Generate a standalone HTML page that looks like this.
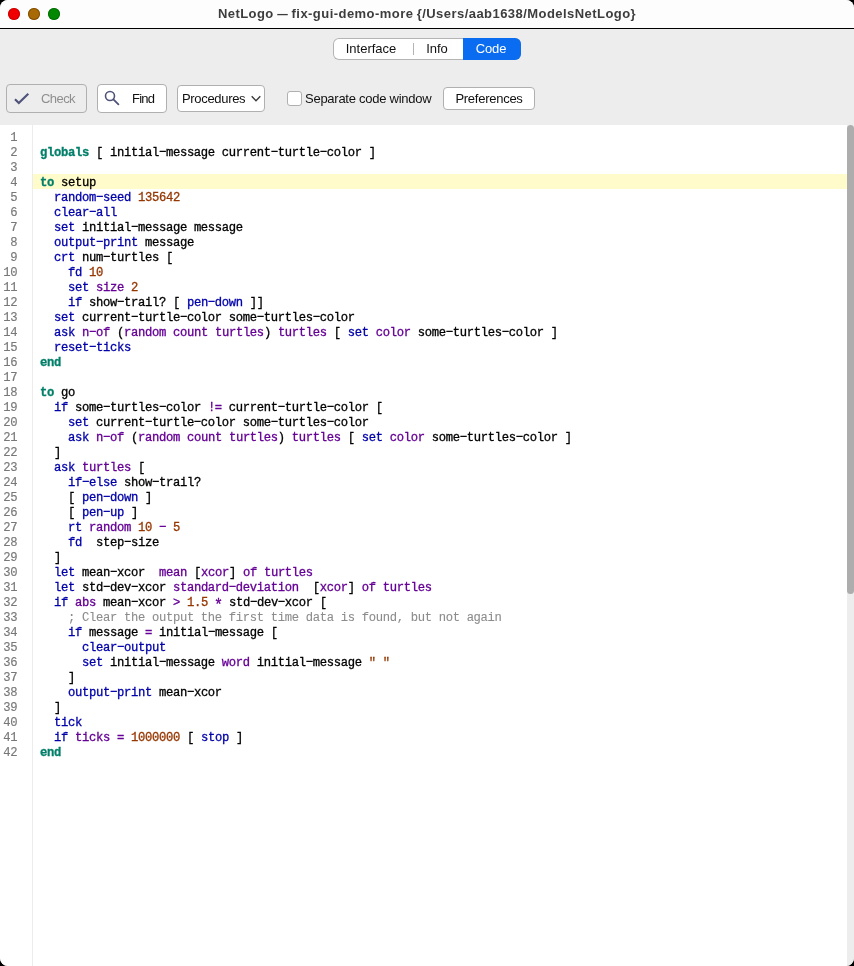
<!DOCTYPE html>
<html><head><meta charset="utf-8"><title>NetLogo</title>
<style>
*{box-sizing:border-box;margin:0;padding:0}
html,body{width:854px;height:966px;overflow:hidden;background:#000;font-family:"Liberation Sans",sans-serif}
#win{position:absolute;left:0;top:0;width:854px;height:966px;background:#ededed;border-radius:8px;overflow:hidden}
#title{position:absolute;left:0;top:0;width:854px;height:28px;background:#fdfdfd;border-bottom:1px solid #000;height:29px}
#title .t{position:absolute;left:0;width:854px;top:6px;text-align:center;font-weight:bold;font-size:13px;color:#3d3d3d;letter-spacing:0.45px;word-spacing:-0.7px;will-change:transform}
.dot{position:absolute;top:8px;width:12px;height:12px;border-radius:50%}
#tabs{position:absolute;left:333px;top:38px;width:188px;height:22px;border-radius:6px;background:#fff;overflow:hidden;font-size:13px;box-shadow:inset 0 0 0 1px #b4b4b4}
#tabs div{position:absolute;top:1px;height:20px;line-height:20px;text-align:center;color:#111;will-change:transform}
.btn{position:absolute;border:1px solid #b0b0b0;border-radius:4px;background:#fff;font-size:13px;color:#111}
.btn span{position:absolute;top:0;white-space:nowrap;will-change:transform}
#code{position:absolute;left:0;top:125px;width:847px;height:841px;background:#fff}
#gut{position:absolute;left:32px;top:0;width:1px;height:841px;background:#ececec}
.ln{position:absolute;left:0;width:847px;height:15px;line-height:15px;font-family:"Liberation Mono",monospace;font-size:12.2px;letter-spacing:-0.32px;white-space:pre}
#hlbar{position:absolute;left:33px;top:49px;width:814px;height:15px;background:#fffbcb}
#lines{position:absolute;left:0;top:125px;width:847px;height:841px;will-change:transform}
.no{position:absolute;left:0;width:17.2px;text-align:right;top:2.25px;color:#787878;-webkit-text-stroke:0.15px;transform-origin:17.2px 10.75px;transform:scale(1.0,1.12)}
.tx{position:absolute;left:40px;top:2.25px;color:#000;-webkit-text-stroke:0.3px;transform-origin:0 10.75px;transform:scaleY(1.12)}
.k{color:#007f69;font-weight:bold} .m{color:#0000aa} .r{color:#660096} .n{color:#963700} .c{color:#8c8c8c;-webkit-text-stroke:0.1px}
#sb{position:absolute;left:847px;top:125px;width:7px;height:841px;background:#ededed}
#th{position:absolute;left:0;top:0;width:7px;height:469px;border-radius:3.5px;background:#adadad}
</style></head><body>
<div id="win">
<div id="title">
<div class="dot" style="left:8px;background:#f00000;box-shadow:inset 0 0 0 1px rgba(190,0,0,.75)"></div>
<div class="dot" style="left:28px;background:#a86a04;box-shadow:inset 0 0 0 1px rgba(125,70,0,.8)"></div>
<div class="dot" style="left:48px;background:#048804;box-shadow:inset 0 0 0 1px rgba(0,105,0,.8)"></div>
<div class="t">NetLogo <span style="display:inline-block;transform:scaleX(.81);margin:0 -1.2px">—</span> fix-gui-demo-more {/Users/aab1638/ModelsNetLogo}</div>
</div>
<div id="tabs">
<div style="left:0;width:76px">Interface</div>
<div style="left:80px;width:1px;top:5px;height:12px;background:#b4b4b4"></div>
<div style="left:79px;width:50px">Info</div>
<div style="left:130px;width:58px;top:0;height:22px;background:#0a6cf0"></div>
<div style="left:130px;width:56px;color:#fff;letter-spacing:-0.1px">Code</div>
</div>
<div class="btn" style="left:6px;top:84px;width:81px;height:29px;background:#ededed"><span style="left:33.6px;top:6px;color:#8f8f8f;letter-spacing:-0.57px">Check</span>
<svg style="position:absolute;left:7px;top:7px" width="17" height="14" viewBox="0 0 17 14"><path d="M1 7.3 L4.8 11 L14.3 1.7" fill="none" stroke="#50547a" stroke-width="2.2"/></svg></div>
<div class="btn" style="left:97px;top:84px;width:70px;height:29px"><span style="left:33.8px;top:6px;letter-spacing:-0.8px">Find</span>
<svg style="position:absolute;left:6.3px;top:5.2px" width="16" height="16" viewBox="0 0 16 16"><circle cx="6" cy="6" r="4.5" fill="none" stroke="#50547a" stroke-width="1.6"/><path d="M9.4 9.4 L14.4 14.4" stroke="#50547a" stroke-width="1.8" stroke-linecap="round"/></svg></div>
<div class="btn" style="left:177px;top:85px;width:88px;height:27px"><span style="left:4px;top:5px;letter-spacing:-0.32px">Procedures</span>
<svg style="position:absolute;left:71px;top:8.5px" width="13" height="8" viewBox="0 0 13 8"><path d="M2.7 1.3 L7 5.8 L11.3 1.3" fill="none" stroke="#3a3a3a" stroke-width="1.35"/></svg></div>
<div class="btn" style="left:287px;top:91px;width:15px;height:15px;border-radius:3px"></div>
<div style="position:absolute;left:305px;top:91px;font-size:13px;color:#111;white-space:nowrap;letter-spacing:-0.26px;will-change:transform">Separate code window</div>
<div class="btn" style="left:443px;top:87px;width:92px;height:23px"><span style="left:0;width:90px;text-align:center;top:3px;letter-spacing:-0.26px">Preferences</span></div>
<div id="code"><div id="gut"></div><div id="hlbar"></div></div>
<div id="lines">
<div class="ln" style="top:4px"><span class="no">1</span><span class="tx"></span></div>
<div class="ln" style="top:19px"><span class="no">2</span><span class="tx"><span class="k">globals</span> [ initial&#8722;message current&#8722;turtle&#8722;color ]</span></div>
<div class="ln" style="top:34px"><span class="no">3</span><span class="tx"></span></div>
<div class="ln hl" style="top:49px"><span class="no">4</span><span class="tx"><span class="k">to</span> setup</span></div>
<div class="ln" style="top:64px"><span class="no">5</span><span class="tx">  <span class="m">random&#8722;seed</span> <span class="n">135642</span></span></div>
<div class="ln" style="top:79px"><span class="no">6</span><span class="tx">  <span class="m">clear&#8722;all</span></span></div>
<div class="ln" style="top:94px"><span class="no">7</span><span class="tx">  <span class="m">set</span> initial&#8722;message message</span></div>
<div class="ln" style="top:109px"><span class="no">8</span><span class="tx">  <span class="m">output&#8722;print</span> message</span></div>
<div class="ln" style="top:124px"><span class="no">9</span><span class="tx">  <span class="m">crt</span> num&#8722;turtles [</span></div>
<div class="ln" style="top:139px"><span class="no">10</span><span class="tx">    <span class="m">fd</span> <span class="n">10</span></span></div>
<div class="ln" style="top:154px"><span class="no">11</span><span class="tx">    <span class="m">set</span> <span class="r">size</span> <span class="n">2</span></span></div>
<div class="ln" style="top:169px"><span class="no">12</span><span class="tx">    <span class="m">if</span> show&#8722;trail? [ <span class="m">pen&#8722;down</span> ]]</span></div>
<div class="ln" style="top:184px"><span class="no">13</span><span class="tx">  <span class="m">set</span> current&#8722;turtle&#8722;color some&#8722;turtles&#8722;color</span></div>
<div class="ln" style="top:199px"><span class="no">14</span><span class="tx">  <span class="m">ask</span> <span class="r">n&#8722;of</span> (<span class="r">random</span> <span class="r">count</span> <span class="r">turtles</span>) <span class="r">turtles</span> [ <span class="m">set</span> <span class="r">color</span> some&#8722;turtles&#8722;color ]</span></div>
<div class="ln" style="top:214px"><span class="no">15</span><span class="tx">  <span class="m">reset&#8722;ticks</span></span></div>
<div class="ln" style="top:229px"><span class="no">16</span><span class="tx"><span class="k">end</span></span></div>
<div class="ln" style="top:244px"><span class="no">17</span><span class="tx"></span></div>
<div class="ln" style="top:259px"><span class="no">18</span><span class="tx"><span class="k">to</span> go</span></div>
<div class="ln" style="top:274px"><span class="no">19</span><span class="tx">  <span class="m">if</span> some&#8722;turtles&#8722;color <span class="r">!=</span> current&#8722;turtle&#8722;color [</span></div>
<div class="ln" style="top:289px"><span class="no">20</span><span class="tx">    <span class="m">set</span> current&#8722;turtle&#8722;color some&#8722;turtles&#8722;color</span></div>
<div class="ln" style="top:304px"><span class="no">21</span><span class="tx">    <span class="m">ask</span> <span class="r">n&#8722;of</span> (<span class="r">random</span> <span class="r">count</span> <span class="r">turtles</span>) <span class="r">turtles</span> [ <span class="m">set</span> <span class="r">color</span> some&#8722;turtles&#8722;color ]</span></div>
<div class="ln" style="top:319px"><span class="no">22</span><span class="tx">  ]</span></div>
<div class="ln" style="top:334px"><span class="no">23</span><span class="tx">  <span class="m">ask</span> <span class="r">turtles</span> [</span></div>
<div class="ln" style="top:349px"><span class="no">24</span><span class="tx">    <span class="m">if&#8722;else</span> show&#8722;trail?</span></div>
<div class="ln" style="top:364px"><span class="no">25</span><span class="tx">    [ <span class="m">pen&#8722;down</span> ]</span></div>
<div class="ln" style="top:379px"><span class="no">26</span><span class="tx">    [ <span class="m">pen&#8722;up</span> ]</span></div>
<div class="ln" style="top:394px"><span class="no">27</span><span class="tx">    <span class="m">rt</span> <span class="r">random</span> <span class="n">10</span> <span class="r">&#8722;</span> <span class="n">5</span></span></div>
<div class="ln" style="top:409px"><span class="no">28</span><span class="tx">    <span class="m">fd</span>  step&#8722;size</span></div>
<div class="ln" style="top:424px"><span class="no">29</span><span class="tx">  ]</span></div>
<div class="ln" style="top:439px"><span class="no">30</span><span class="tx">  <span class="m">let</span> mean&#8722;xcor  <span class="r">mean</span> [<span class="r">xcor</span>] <span class="r">of</span> <span class="r">turtles</span></span></div>
<div class="ln" style="top:454px"><span class="no">31</span><span class="tx">  <span class="m">let</span> std&#8722;dev&#8722;xcor <span class="r">standard&#8722;deviation</span>  [<span class="r">xcor</span>] <span class="r">of</span> <span class="r">turtles</span></span></div>
<div class="ln" style="top:469px"><span class="no">32</span><span class="tx">  <span class="m">if</span> <span class="r">abs</span> mean&#8722;xcor <span class="r">&gt;</span> <span class="n">1.5</span> <span class="r"><span style="position:relative;top:4px;font-size:15px;line-height:1px;margin-left:-0.9px;letter-spacing:-1.1px">*</span></span> std&#8722;dev&#8722;xcor [</span></div>
<div class="ln" style="top:484px"><span class="no">33</span><span class="tx">    <span class="c">; Clear the output the first time data is found, but not again</span></span></div>
<div class="ln" style="top:499px"><span class="no">34</span><span class="tx">    <span class="m">if</span> message <span class="r">=</span> initial&#8722;message [</span></div>
<div class="ln" style="top:514px"><span class="no">35</span><span class="tx">      <span class="m">clear&#8722;output</span></span></div>
<div class="ln" style="top:529px"><span class="no">36</span><span class="tx">      <span class="m">set</span> initial&#8722;message <span class="r">word</span> initial&#8722;message <span class="n">&quot; &quot;</span></span></div>
<div class="ln" style="top:544px"><span class="no">37</span><span class="tx">    ]</span></div>
<div class="ln" style="top:559px"><span class="no">38</span><span class="tx">    <span class="m">output&#8722;print</span> mean&#8722;xcor</span></div>
<div class="ln" style="top:574px"><span class="no">39</span><span class="tx">  ]</span></div>
<div class="ln" style="top:589px"><span class="no">40</span><span class="tx">  <span class="m">tick</span></span></div>
<div class="ln" style="top:604px"><span class="no">41</span><span class="tx">  <span class="m">if</span> <span class="r">ticks</span> <span class="r">=</span> <span class="n">1000000</span> [ <span class="m">stop</span> ]</span></div>
<div class="ln" style="top:619px"><span class="no">42</span><span class="tx"><span class="k">end</span></span></div>
</div>
<div id="sb"><div id="th"></div></div>
</div>
</body></html>
